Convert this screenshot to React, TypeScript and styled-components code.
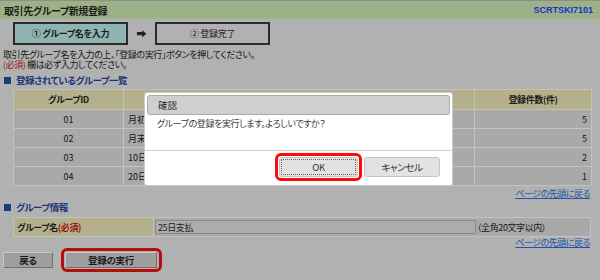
import React from 'react';
import styled, { createGlobalStyle } from 'styled-components';

const JP = `"Noto Sans CJK JP", "Noto Sans", sans-serif`;

const Global = createGlobalStyle`
  html, body { margin: 0; padding: 0; }
  body {
    width: 600px; height: 280px; overflow: hidden;
    background: #b1b1b1;
    font-family: ${JP};
    font-feature-settings: "palt";
    color: #151515;
  }
`;

const Page = styled.div`
  position: relative;
  width: 600px;
  height: 280px;
  display: flex;
  flex-direction: column;
`;

const HeaderBar = styled.header`
  height: 19px;
  box-sizing: border-box;
  border-top: 1px solid #8e8e8e;
  background: #9cb185;
  display: flex;
  align-items: center;
  justify-content: space-between;
  padding: 0 7px 0 4px;
`;

const Title = styled.h1`
  margin: 0;
  font-size: 10px;
  font-weight: bold;
  letter-spacing: -0.4px;
  color: #1c1c1c;
`;

const ScreenId = styled.span`
  font-family: "Liberation Sans", Arial, sans-serif;
  font-size: 9px;
  font-weight: bold;
  color: #1a2ed0;
`;

const Steps = styled.div`
  display: flex;
  align-items: center;
  margin-top: 3px;
  padding-left: 13px;
`;

const StepBox = styled.div<{ $active?: boolean }>`
  width: 115px;
  height: 23px;
  box-sizing: border-box;
  border: 2px solid #2b2b2b;
  background: ${p => (p.$active ? '#8fb4b1' : '#b1b1b1')};
  display: flex;
  align-items: center;
  justify-content: center;
  font-size: 9px;
  letter-spacing: -0.3px;
  font-weight: ${p => (p.$active ? 'bold' : 'normal')};
  color: #1a1a1a;
`;

const Arrow = styled.span`
  width: 27px;
  text-align: center;
  font-size: 10px;
  font-weight: bold;
  color: #222;
`;

const Instructions = styled.div`
  margin-top: 4px;
  padding-left: 3px;
  font-size: 9px;
  line-height: 11px;
  letter-spacing: -0.4px;
  color: #161616;
`;

const Line = styled.p`
  margin: 0;
  height: 10px;
  overflow: visible;
`;

const Required = styled.span`
  color: #9a1414;
`;

const SectionTitle = styled.h2<{ $top: number }>`
  margin: ${p => p.$top}px 0 0 4px;
  height: 10px;
  display: flex;
  align-items: center;
  gap: 5px;
  font-size: 9.5px;
  letter-spacing: -0.5px;
  font-weight: bold;
  color: #1c3577;
  &::before {
    content: '';
    width: 7px;
    height: 7px;
    background: #1c3a78;
  }
`;

const Table = styled.table`
  margin: 4px 0 0 13px;
  width: 578px;
  border-collapse: collapse;
  table-layout: fixed;
  font-size: 9px;
`;

const Th = styled.th<{ $w: number }>`
  width: ${p => p.$w}px;
  height: 20px;
  padding: 0;
  box-sizing: border-box;
  background: #b4b08b;
  border: 1px solid #c3c3b5;
  font-weight: bold;
  letter-spacing: -0.4px;
  color: #1b1b1b;
  text-align: center;
`;

const Td = styled.td<{ $align: 'left' | 'center' | 'right' }>`
  height: 19px;
  padding: 0 4px;
  box-sizing: border-box;
  background: #a9a9a9;
  border: 1px solid #c2c2c2;
  text-align: ${p => p.$align};
  color: #151515;
  white-space: nowrap;
  overflow: hidden;
`;

const LinkRow = styled.div<{ $top: number }>`
  margin-top: ${p => p.$top}px;
  height: 10px;
  display: flex;
  justify-content: flex-end;
  padding-right: 10px;
`;

const TopLink = styled.a`
  font-size: 9px;
  line-height: 10px;
  color: #1d55a8;
  text-decoration: underline;
  letter-spacing: -0.5px;
`;

const FormRow = styled.div`
  margin: 5px 0 0 13px;
  width: 578px;
  height: 20px;
  box-sizing: border-box;
  display: flex;
  border: 1px solid #c2c2c2;
`;

const FormLabel = styled.div`
  width: 140px;
  box-sizing: border-box;
  border-right: 1px solid #c2c2c2;
  background: #b4b08b;
  display: flex;
  align-items: center;
  padding-left: 3px;
  font-size: 9px;
  letter-spacing: -0.4px;
  font-weight: bold;
  color: #1b1b1b;
`;

const FormCell = styled.div`
  flex: 1;
  background: #a9a9a9;
  display: flex;
  align-items: center;
  padding-left: 1px;
  font-size: 9px;
  letter-spacing: -0.4px;
`;

const TextInput = styled.div`
  width: 321px;
  height: 14px;
  box-sizing: border-box;
  border: 1px solid #8a8a8a;
  background: #acacac;
  padding-left: 2px;
  display: flex;
  align-items: center;
  color: #1a1a1a;
`;

const Note = styled.span`
  margin-left: 1px;
`;

const ButtonRow = styled.div`
  display: flex;
  align-items: center;
  padding-left: 3px;
  gap: 8px;
`;

const PageButton = styled.div<{ $w: number }>`
  width: ${p => p.$w}px;
  height: 16px;
  box-sizing: border-box;
  border: 1px solid #707070;
  border-top-color: #c8c8c8;
  border-left-color: #c8c8c8;
  background: #9e9e9e;
  display: flex;
  align-items: center;
  justify-content: center;
  font-size: 9.5px;
  letter-spacing: -0.3px;
  font-weight: bold;
  color: #1a1a1a;
`;

const Highlight = styled.div<{ $color: string; $pad: string }>`
  border: 3px solid ${p => p.$color};
  border-radius: 6px;
  padding: ${p => p.$pad};
  display: flex;
`;

const Dialog = styled.div`
  position: absolute;
  left: 144px;
  top: 92px;
  width: 309px;
  height: 94px;
  box-sizing: border-box;
  background: #ffffff;
  border: 1px solid #c9c9c9;
  border-radius: 3px;
  padding: 2px;
  display: flex;
  flex-direction: column;
`;

const DialogTitle = styled.div`
  height: 20px;
  box-sizing: border-box;
  background: #cfcfcf;
  border: 1px solid #acacac;
  border-radius: 3px;
  display: flex;
  align-items: center;
  padding-left: 10px;
  font-size: 9.5px;
  color: #2a2a2a;
`;

const DialogBody = styled.div`
  flex: 1;
  padding: 3px 0 0 10px;
  font-size: 9px;
  line-height: 12px;
  letter-spacing: -0.4px;
  color: #3a3a3a;
`;

const DialogFooter = styled.div`
  margin: 0 -2px -2px;
  height: 35px;
  box-sizing: border-box;
  border-top: 1px solid #cfcfcf;
  display: flex;
  justify-content: flex-end;
  align-items: flex-start;
  padding: 2px 12px 0 0;
  gap: 2px;
`;

const DialogButton = styled.div<{ $w: number; $focus?: boolean }>`
  width: ${p => p.$w}px;
  height: 20px;
  box-sizing: border-box;
  margin-top: ${p => (p.$focus ? 0 : 4)}px;
  background: #e2e2e2;
  border: 1px solid #c4c4c4;
  border-radius: 3px;
  display: flex;
  align-items: center;
  justify-content: center;
  font-size: 9.5px;
  letter-spacing: -0.4px;
  color: #333;
  outline: ${p => (p.$focus ? '1px dotted #666' : 'none')};
  outline-offset: -3px;
`;

const rows = [
  { id: '01', name: '月初支払', count: 5 },
  { id: '02', name: '月末支払', count: 5 },
  { id: '03', name: '10日支払', count: 2 },
  { id: '04', name: '20日支払', count: 1 },
];

export default function App() {
  return (
    <>
      <Global />
      <Page>
        <HeaderBar>
          <Title>取引先グループ新規登録</Title>
          <ScreenId>SCRTSKI7101</ScreenId>
        </HeaderBar>

        <Steps>
          <StepBox $active>① グループ名を入力</StepBox>
          <Arrow>➡</Arrow>
          <StepBox>② 登録完了</StepBox>
        </Steps>

        <Instructions>
          <Line>取引先グループ名を入力の上、「登録の実行」ボタンを押してください。</Line>
          <Line>
            <Required>(必須)</Required> 欄は必ず入力してください。
          </Line>
        </Instructions>

        <SectionTitle $top={6}>登録されているグループ一覧</SectionTitle>

        <Table>
          <thead>
            <tr>
              <Th $w={110}>グループID</Th>
              <Th $w={351}>グループ名</Th>
              <Th $w={117}>登録件数(件)</Th>
            </tr>
          </thead>
          <tbody>
            {rows.map(r => (
              <tr key={r.id}>
                <Td $align="center">{r.id}</Td>
                <Td $align="left">{r.name}</Td>
                <Td $align="right">{r.count}</Td>
              </tr>
            ))}
          </tbody>
        </Table>

        <LinkRow $top={3}>
          <TopLink>ページの先頭に戻る</TopLink>
        </LinkRow>

        <SectionTitle $top={3}>グループ情報</SectionTitle>

        <FormRow>
          <FormLabel>
            グループ名<Required>(必須)</Required>
          </FormLabel>
          <FormCell>
            <TextInput>25日支払</TextInput>
            <Note>（全角20文字以内）</Note>
          </FormCell>
        </FormRow>

        <LinkRow $top={1}>
          <TopLink>ページの先頭に戻る</TopLink>
        </LinkRow>

        <ButtonRow>
          <PageButton $w={50}>戻る</PageButton>
          <Highlight $color="#b80d0d" $pad="1px 2px 1px 1px">
            <PageButton $w={92}>登録の実行</PageButton>
          </Highlight>
        </ButtonRow>

        <Dialog>
          <DialogTitle>確認</DialogTitle>
          <DialogBody>グループの登録を実行します。よろしいですか？</DialogBody>
          <DialogFooter>
            <Highlight $color="#ff0a0a" $pad="1px">
              <DialogButton $w={79} $focus>OK</DialogButton>
            </Highlight>
            <DialogButton $w={76}>キャンセル</DialogButton>
          </DialogFooter>
        </Dialog>
      </Page>
    </>
  );
}
